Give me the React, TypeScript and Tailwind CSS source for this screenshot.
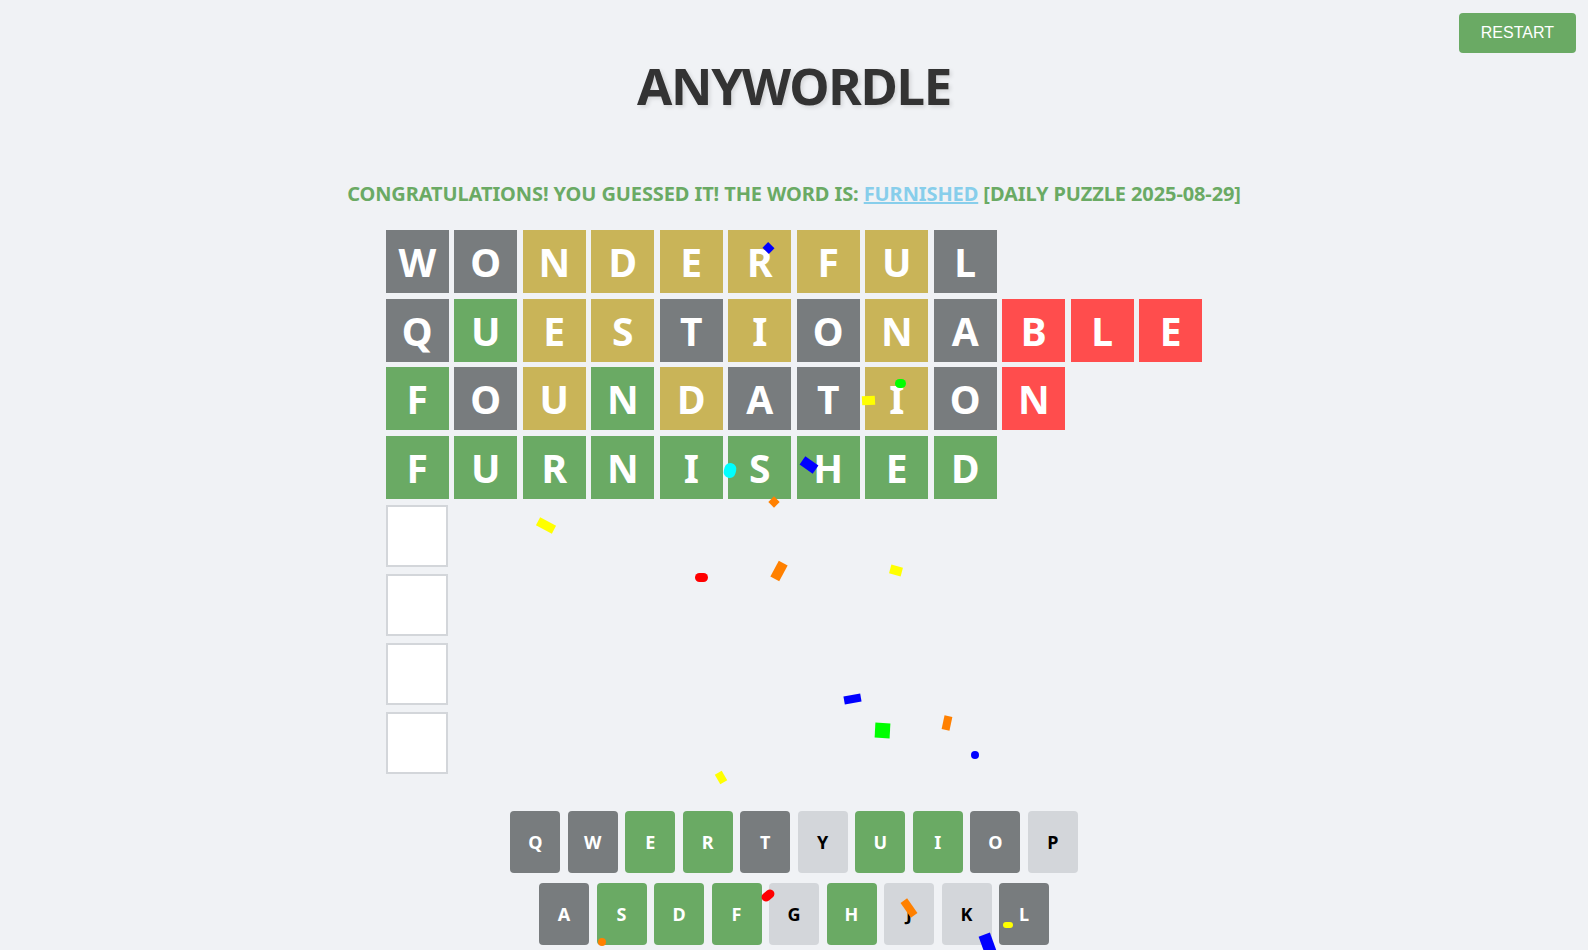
import React from "react";

type TileState = "x" | "y" | "g" | "r";
type KeyState = "x" | "g" | "l";

const tileColor: Record<TileState, string> = {
  x: "bg-[#787c7e]",
  y: "bg-[#c9b458]",
  g: "bg-[#6aaa64]",
  r: "bg-[#ff4d4d]",
};

const keyColor: Record<KeyState, string> = {
  x: "bg-[#787c7e] text-white",
  g: "bg-[#6aaa64] text-white",
  l: "bg-[#d3d6da] text-black",
};

const guesses: { word: string; marks: string }[] = [
  { word: "WONDERFUL", marks: "xxyyyyyyx" },
  { word: "QUESTIONABLE", marks: "xgyyxyxyxrrr" },
  { word: "FOUNDATION", marks: "gxygyxxyxr" },
  { word: "FURNISHED", marks: "ggggggggg" },
];

const keyRows: { keys: string[]; marks: string }[] = [
  { keys: ["Q", "W", "E", "R", "T", "Y", "U", "I", "O", "P"], marks: "xxggxlggxl" },
  { keys: ["A", "S", "D", "F", "G", "H", "J", "K", "L"], marks: "xggglgllx" },
];

// falling confetti pieces, frozen mid-flight
const confetti: string[] = [
  "left-[764px] top-[244px] w-[9px] h-[8px] rotate-[45deg] bg-[#0000ff]",
  "left-[895px] top-[379px] w-[11px] h-[9px] rounded-full bg-[#00ff00]",
  "left-[862px] top-[396px] w-[13px] h-[9px] -rotate-[3deg] bg-[#ffff00]",
  "left-[724px] top-[463px] w-[12px] h-[15px] rotate-[15deg] rounded-full bg-[#00ffff]",
  "left-[801px] top-[460px] w-[16px] h-[10px] rotate-[35deg] bg-[#0000ff]",
  "left-[770px] top-[498px] w-[8px] h-[8px] rotate-[45deg] bg-[#ff8000]",
  "left-[537px] top-[521px] w-[18px] h-[9px] rotate-[28deg] bg-[#ffff00]",
  "left-[695px] top-[573px] w-[13px] h-[9px] rounded-full bg-[#ff0000]",
  "left-[774px] top-[562px] w-[10px] h-[18px] rotate-[28deg] bg-[#ff8000]",
  "left-[890px] top-[566px] w-[12px] h-[9px] rotate-[15deg] bg-[#ffff00]",
  "left-[844px] top-[695px] w-[17px] h-[8px] -rotate-[10deg] bg-[#0000ff]",
  "left-[875px] top-[723px] w-[15px] h-[15px] rotate-[3deg] bg-[#00ff00]",
  "left-[943px] top-[716px] w-[8px] h-[14px] rotate-[12deg] bg-[#ff8000]",
  "left-[971px] top-[751px] w-[8px] h-[8px] rounded-full bg-[#0000ff]",
  "left-[717px] top-[772px] w-[8px] h-[11px] -rotate-[30deg] bg-[#ffff00]",
  "left-[761px] top-[891px] w-[14px] h-[9px] -rotate-[40deg] rounded-full bg-[#ff0000]",
  "left-[905px] top-[899px] w-[8px] h-[18px] -rotate-[35deg] bg-[#ff8000]",
  "left-[1003px] top-[922px] w-[10px] h-[6px] rounded-full bg-[#ffff00]",
  "left-[982px] top-[934px] w-[12px] h-[22px] -rotate-[20deg] bg-[#0000ff]",
  "left-[598px] top-[938px] w-[8px] h-[8px] rounded-full bg-[#ff8000]",
];

function Tile({ letter, state }: { letter: string; state: TileState }) {
  return (
    <div
      className={`flex h-[63px] w-[63px] items-center justify-center text-[39px] font-bold leading-none text-white ${tileColor[state]}`}
    >
      {letter}
    </div>
  );
}

function EmptyRow() {
  return (
    <div className="h-[63.5px] pt-[1px]">
      <div className="h-[62px] w-[62px] border-2 border-[#d3d6da] bg-white" />
    </div>
  );
}

export default function App() {
  return (
    <div className="relative h-screen overflow-hidden bg-[#f0f2f5] font-['Noto_Sans','Open_Sans',sans-serif]">
      <div className="flex justify-end pr-[12px] pt-[13px]">
        <button className="h-[40px] rounded-[4px] bg-[#6aaa64] px-[22px] font-['Liberation_Sans',Arial,sans-serif] text-[16px] leading-none text-white">
          RESTART
        </button>
      </div>

      <h1 className="mt-[7px] text-center text-[51px] font-bold leading-none tracking-[-1.3px] text-[#333333] [text-shadow:2px_2px_4px_rgba(0,0,0,0.12)]">
        ANYWORDLE
      </h1>

      <p className="mt-[73px] text-center text-[20px] font-bold leading-none tracking-[-0.1px] text-[#6aaa64]">
        CONGRATULATIONS! YOU GUESSED IT! THE WORD IS:{" "}
        <a href="#" className="text-[#87ceeb] underline">
          FURNISHED
        </a>{" "}
        [DAILY PUZZLE 2025-08-29]
      </p>

      <div className="mx-auto mt-[26px] flex w-fit flex-col items-start gap-[5.5px]">
        {guesses.map((g) => (
          <div key={g.word} className="flex gap-[5.5px]">
            {g.word.split("").map((ch, i) => (
              <Tile key={i} letter={ch} state={g.marks[i] as TileState} />
            ))}
          </div>
        ))}
        <EmptyRow />
        <EmptyRow />
        <EmptyRow />
        <EmptyRow />
      </div>

      <div className="mt-[36.5px] flex flex-col items-center gap-[10px]">
        {keyRows.map((row, r) => (
          <div key={r} className="flex gap-[7.5px]">
            {row.keys.map((k, i) => (
              <div
                key={k}
                className={`flex h-[62px] w-[50px] items-center justify-center rounded-[4px] text-[18px] font-bold leading-none ${keyColor[row.marks[i] as KeyState]}`}
              >
                {k}
              </div>
            ))}
          </div>
        ))}
      </div>

      <div className="pointer-events-none absolute inset-0">
        {confetti.map((c, i) => (
          <span key={i} className={`absolute ${c}`} />
        ))}
      </div>
    </div>
  );
}
